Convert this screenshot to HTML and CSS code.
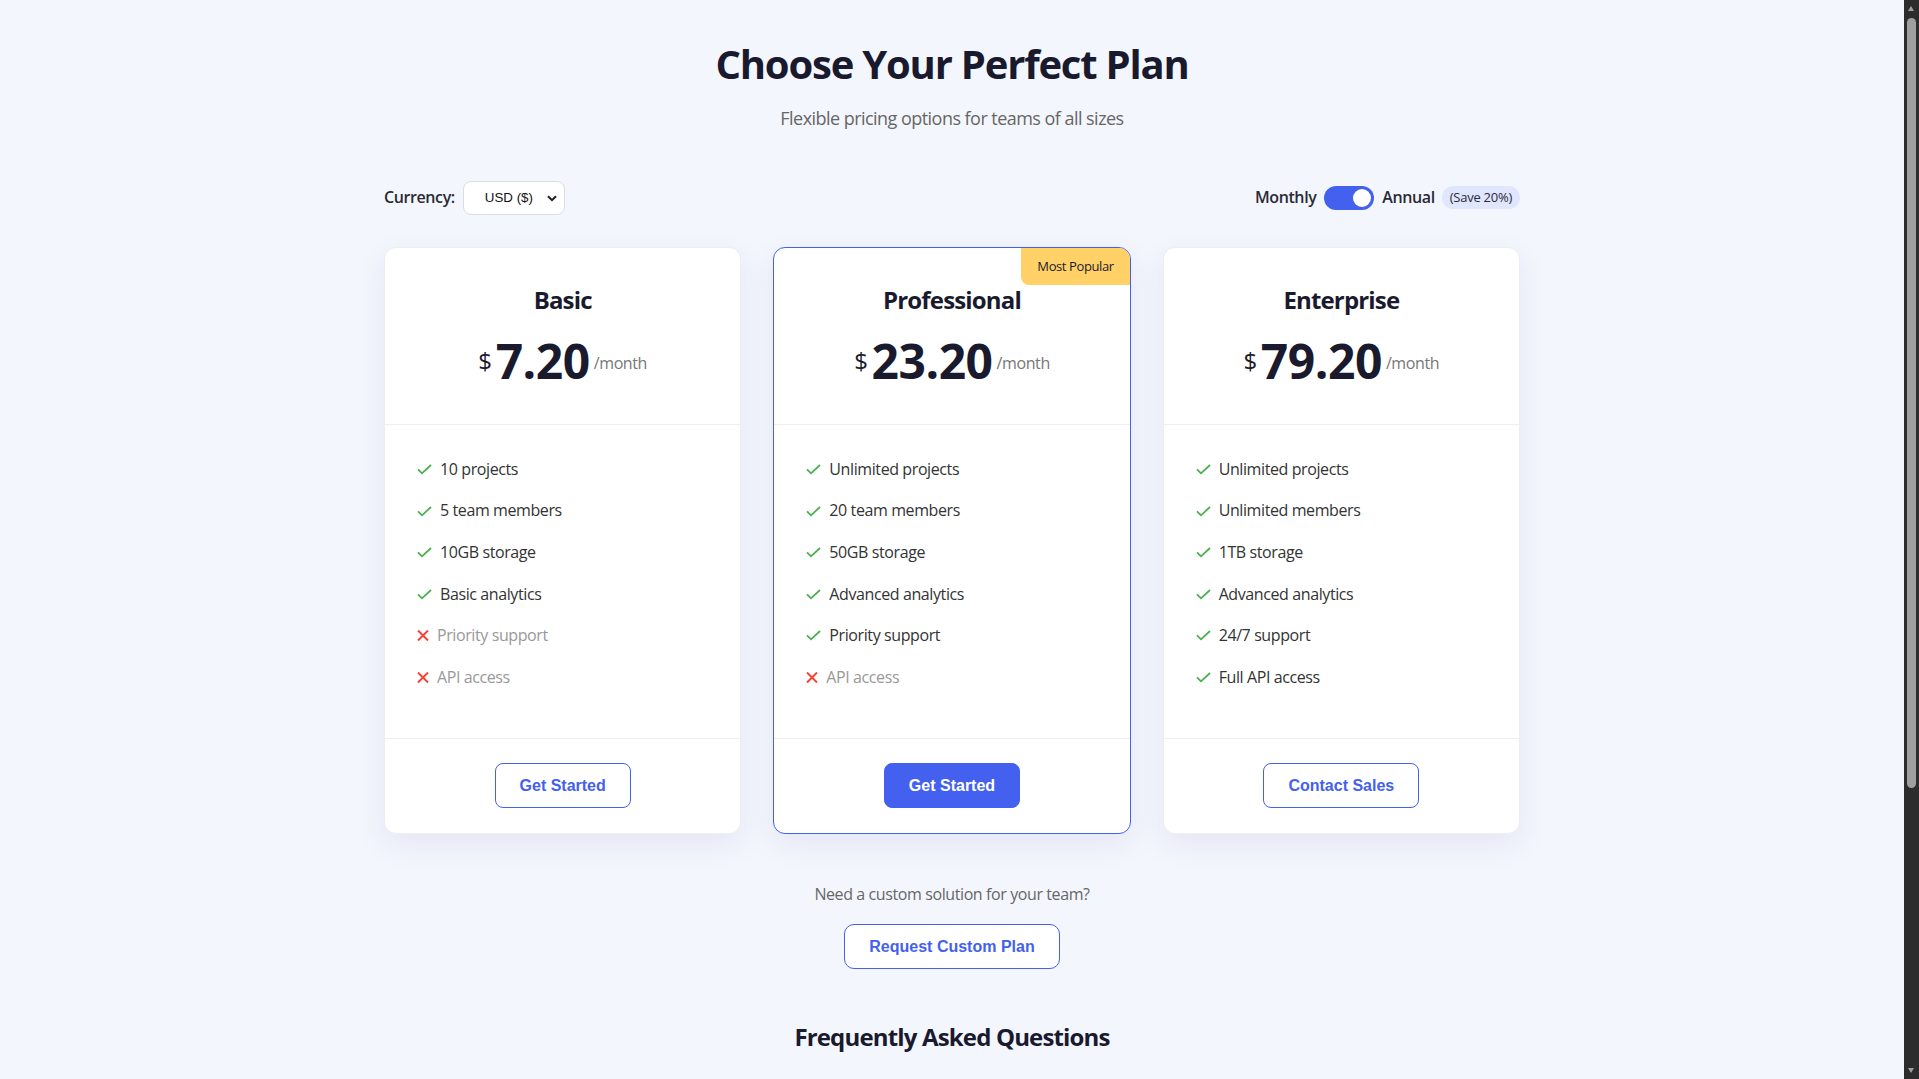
FILE: index.html
```html
<!DOCTYPE html>
<html lang="en">
<head>
<meta charset="utf-8">
<title>Pricing Plans</title>
<link rel="stylesheet" href="styles.css">
</head>
<body>
<div class="page">
  <header class="hero">
    <h1>Choose Your Perfect Plan</h1>
    <p>Flexible pricing options for teams of all sizes</p>
  </header>

  <div class="controls">
    <div class="currency">
      <label for="cur">Currency:</label>
      <span class="select-wrap">
        <select id="cur">
          <option>USD ($)</option>
          <option>EUR (€)</option>
          <option>GBP (£)</option>
        </select>
        <svg class="chev" width="10" height="7" viewBox="0 0 10 7"><path d="M1 1.2 L5 5.2 L9 1.2" fill="none" stroke="#1f1f1f" stroke-width="2"/></svg>
      </span>
    </div>
    <div class="billing">
      <span class="bill-label">Monthly</span>
      <span class="toggle"><span class="knob"></span></span>
      <span class="bill-label">Annual</span>
      <span class="save">(Save 20%)</span>
    </div>
  </div>

  <div class="plans">
    <article class="plan">
      <div class="plan-head">
        <h3>Basic</h3>
        <div class="price"><span class="cur">$</span><span class="amt">7.20</span><span class="per">/month</span></div>
      </div>
      <ul class="features">
        <li><svg class="ic" width="15" height="11" viewBox="0 0 15 11"><path d="M1 5.3 L5 9.3 L14 1" fill="none" stroke="#4caf50" stroke-width="1.8"/></svg>10 projects</li>
        <li><svg class="ic" width="15" height="11" viewBox="0 0 15 11"><path d="M1 5.3 L5 9.3 L14 1" fill="none" stroke="#4caf50" stroke-width="1.8"/></svg>5 team members</li>
        <li><svg class="ic" width="15" height="11" viewBox="0 0 15 11"><path d="M1 5.3 L5 9.3 L14 1" fill="none" stroke="#4caf50" stroke-width="1.8"/></svg>10GB storage</li>
        <li><svg class="ic" width="15" height="11" viewBox="0 0 15 11"><path d="M1 5.3 L5 9.3 L14 1" fill="none" stroke="#4caf50" stroke-width="1.8"/></svg>Basic analytics</li>
        <li class="off"><svg class="ic x" width="12" height="11" viewBox="0 0 12 11"><path d="M1 0.5 L11 10.5 M11 0.5 L1 10.5" fill="none" stroke="#f44336" stroke-width="2"/></svg>Priority support</li>
        <li class="off"><svg class="ic x" width="12" height="11" viewBox="0 0 12 11"><path d="M1 0.5 L11 10.5 M11 0.5 L1 10.5" fill="none" stroke="#f44336" stroke-width="2"/></svg>API access</li>
      </ul>
      <div class="plan-foot"><button class="btn">Get Started</button></div>
    </article>

    <article class="plan popular">
      <span class="badge">Most Popular</span>
      <div class="plan-head">
        <h3>Professional</h3>
        <div class="price"><span class="cur">$</span><span class="amt">23.20</span><span class="per">/month</span></div>
      </div>
      <ul class="features">
        <li><svg class="ic" width="15" height="11" viewBox="0 0 15 11"><path d="M1 5.3 L5 9.3 L14 1" fill="none" stroke="#4caf50" stroke-width="1.8"/></svg>Unlimited projects</li>
        <li><svg class="ic" width="15" height="11" viewBox="0 0 15 11"><path d="M1 5.3 L5 9.3 L14 1" fill="none" stroke="#4caf50" stroke-width="1.8"/></svg>20 team members</li>
        <li><svg class="ic" width="15" height="11" viewBox="0 0 15 11"><path d="M1 5.3 L5 9.3 L14 1" fill="none" stroke="#4caf50" stroke-width="1.8"/></svg>50GB storage</li>
        <li><svg class="ic" width="15" height="11" viewBox="0 0 15 11"><path d="M1 5.3 L5 9.3 L14 1" fill="none" stroke="#4caf50" stroke-width="1.8"/></svg>Advanced analytics</li>
        <li><svg class="ic" width="15" height="11" viewBox="0 0 15 11"><path d="M1 5.3 L5 9.3 L14 1" fill="none" stroke="#4caf50" stroke-width="1.8"/></svg>Priority support</li>
        <li class="off"><svg class="ic x" width="12" height="11" viewBox="0 0 12 11"><path d="M1 0.5 L11 10.5 M11 0.5 L1 10.5" fill="none" stroke="#f44336" stroke-width="2"/></svg>API access</li>
      </ul>
      <div class="plan-foot"><button class="btn primary">Get Started</button></div>
    </article>

    <article class="plan">
      <div class="plan-head">
        <h3>Enterprise</h3>
        <div class="price"><span class="cur">$</span><span class="amt">79.20</span><span class="per">/month</span></div>
      </div>
      <ul class="features">
        <li><svg class="ic" width="15" height="11" viewBox="0 0 15 11"><path d="M1 5.3 L5 9.3 L14 1" fill="none" stroke="#4caf50" stroke-width="1.8"/></svg>Unlimited projects</li>
        <li><svg class="ic" width="15" height="11" viewBox="0 0 15 11"><path d="M1 5.3 L5 9.3 L14 1" fill="none" stroke="#4caf50" stroke-width="1.8"/></svg>Unlimited members</li>
        <li><svg class="ic" width="15" height="11" viewBox="0 0 15 11"><path d="M1 5.3 L5 9.3 L14 1" fill="none" stroke="#4caf50" stroke-width="1.8"/></svg>1TB storage</li>
        <li><svg class="ic" width="15" height="11" viewBox="0 0 15 11"><path d="M1 5.3 L5 9.3 L14 1" fill="none" stroke="#4caf50" stroke-width="1.8"/></svg>Advanced analytics</li>
        <li><svg class="ic" width="15" height="11" viewBox="0 0 15 11"><path d="M1 5.3 L5 9.3 L14 1" fill="none" stroke="#4caf50" stroke-width="1.8"/></svg>24/7 support</li>
        <li><svg class="ic" width="15" height="11" viewBox="0 0 15 11"><path d="M1 5.3 L5 9.3 L14 1" fill="none" stroke="#4caf50" stroke-width="1.8"/></svg>Full API access</li>
      </ul>
      <div class="plan-foot"><button class="btn">Contact Sales</button></div>
    </article>
  </div>

  <section class="custom">
    <p>Need a custom solution for your team?</p>
    <button class="btn">Request Custom Plan</button>
  </section>

  <section class="faq">
    <h2>Frequently Asked Questions</h2>
    <div class="faq-item">
      <h4>Can I change my plan later?</h4>
      <p>Yes, you can upgrade or downgrade your plan at any time from your account settings.</p>
    </div>
    <div class="faq-item">
      <h4>Is there a free trial?</h4>
      <p>All plans come with a 14-day free trial. No credit card required.</p>
    </div>
    <div class="faq-item">
      <h4>What payment methods do you accept?</h4>
      <p>We accept all major credit cards, PayPal and bank transfers for annual plans.</p>
    </div>
  </section>
</div>

<div class="scrollbar" aria-hidden="true">
  <span class="sb-arrow up"></span>
  <span class="sb-thumb"></span>
  <span class="sb-arrow down"></span>
</div>
</body>
</html>
```

FILE: styles.css
```css
* { box-sizing: border-box; }

body {
  margin: 0 15px 0 0;
  background: #f4f6fd;
  color: #333;
  font-family: "Open Sans", "Noto Sans", sans-serif;
  line-height: 1.6;
  letter-spacing: -0.025em;
}

.page {
  max-width: 1200px;
  margin: 0 auto;
  padding: 32px;
}

.hero {
  text-align: center;
  margin-bottom: 48px;
}

.hero h1 {
  margin: 0 0 8px;
  font-size: 40px;
  line-height: 64px;
  font-weight: 700;
  color: #1a1a2e;
  letter-spacing: -0.03em;
}

.hero p {
  margin: 0;
  font-size: 18px;
  line-height: 28.8px;
  color: #666;
  letter-spacing: -0.03em;
}

.controls {
  display: flex;
  justify-content: space-between;
  align-items: center;
  height: 34px;
  margin-bottom: 32px;
}

.currency {
  display: flex;
  align-items: center;
  gap: 8px;
}

.currency label,
.bill-label {
  font-size: 16px;
  font-weight: 600;
  color: #2a2a35;
}

.select-wrap {
  position: relative;
  display: inline-flex;
}

.select-wrap select {
  appearance: none;
  -webkit-appearance: none;
  width: 102px;
  height: 34px;
  border: 1px solid #dcdde3;
  border-radius: 8px;
  background: #fff;
  font-family: "Liberation Sans", Arial, sans-serif;
  font-size: 13.33px;
  letter-spacing: 0;
  color: #111;
  padding: 0 30px 0 21px;
}

.chev {
  position: absolute;
  right: 8px;
  top: 14px;
  pointer-events: none;
}

.billing {
  display: flex;
  align-items: center;
  gap: 8px;
}

.toggle {
  position: relative;
  width: 50px;
  height: 24px;
  border-radius: 12px;
  background: #4361ee;
}

.knob {
  position: absolute;
  top: 3px;
  left: 29px;
  width: 18px;
  height: 18px;
  border-radius: 50%;
  background: #fff;
}

.save {
  background: #e0e6fd;
  color: #2a2a35;
  font-size: 13px;
  line-height: 19px;
  padding: 2px 8px;
  margin-left: -1px;
  border-radius: 12px;
  letter-spacing: -0.02em;
}

.plans {
  display: grid;
  grid-template-columns: repeat(3, 1fr);
  gap: 32px;
}

.plan {
  position: relative;
  display: flex;
  flex-direction: column;
  background: #fff;
  border: 1px solid #eceef4;
  border-radius: 12px;
  box-shadow: 0 10px 30px rgba(40, 55, 130, 0.08);
}

.plan.popular {
  border-color: #4361ee;
}

.badge {
  position: absolute;
  top: 0;
  right: 0;
  background: #ffd166;
  color: #1a1a2e;
  font-size: 13px;
  line-height: 21px;
  padding: 8px 16px;
  border-radius: 0 11px 0 8px;
}

.plan-head {
  text-align: center;
  padding: 33px 32px 24px;
  border-bottom: 1px solid #eee;
}

.plan-head h3 {
  margin: 0 0 4px;
  font-size: 24px;
  line-height: 38px;
  font-weight: 700;
  color: #1a1a2e;
  letter-spacing: -0.035em;
}

.price {
  display: flex;
  justify-content: center;
  align-items: center;
  height: 77px;
  color: #1a1a2e;
}

.cur {
  font-size: 24px;
  line-height: 38.4px;
  margin-right: 4px;
}

.amt {
  font-size: 48px;
  line-height: 76.8px;
  font-weight: 700;
  letter-spacing: -0.01em;
}

.per {
  font-size: 16px;
  line-height: 25.6px;
  color: #777;
  margin-left: 4px;
  margin-top: 4px;
}

.features {
  list-style: none;
  margin: 0;
  padding: 24px 32px 40px;
  flex: 1;
}

.features li {
  display: flex;
  align-items: center;
  padding: 8px 0;
  font-size: 16px;
  line-height: 25.6px;
  color: #333;
}

.features li.off {
  color: #999;
}

.ic {
  flex: none;
  margin-right: 8px;
}

.plan-foot {
  text-align: center;
  padding: 24px 32px 25px;
  border-top: 1px solid #eee;
}

.btn {
  display: inline-block;
  font-family: "Liberation Sans", Arial, sans-serif;
  font-weight: 700;
  font-size: 16px;
  line-height: 19px;
  letter-spacing: 0;
  padding: 12px 24px;
  border: 1px solid #4361ee;
  border-radius: 8px;
  background: #fff;
  color: #4361ee;
  cursor: pointer;
}

.btn.primary {
  background: #4361ee;
  color: #fff;
}

.custom {
  text-align: center;
  margin-top: 48px;
}

.custom p {
  margin: 0 0 16px;
  font-size: 16px;
  line-height: 25.6px;
  color: #666;
}

.custom .btn {
  border-radius: 10px;
}

.faq {
  margin: 49px auto 0;
  max-width: 800px;
}

.faq h2 {
  text-align: center;
  margin: 0 0 32px;
  font-size: 24px;
  line-height: 38.4px;
  font-weight: 700;
  color: #1a1a2e;
  letter-spacing: -0.035em;
}

.faq-item {
  background: #fff;
  border-radius: 10px;
  padding: 20px 24px;
  margin-bottom: 16px;
  box-shadow: 0 4px 14px rgba(40, 55, 130, 0.05);
}

.faq-item h4 {
  margin: 0 0 6px;
  font-size: 17px;
  color: #1a1a2e;
}

.faq-item p {
  margin: 0;
  color: #666;
}

/* simulated dark window scrollbar */
.scrollbar {
  position: fixed;
  top: 0;
  right: 0;
  width: 15px;
  height: 100vh;
  background: #2c2c2c;
}

.sb-thumb {
  position: absolute;
  top: 18px;
  left: 3px;
  width: 9px;
  height: 770px;
  border-radius: 5px;
  background: #9f9f9f;
}

.sb-arrow {
  position: absolute;
  left: 4px;
  width: 0;
  height: 0;
  border-left: 3.5px solid transparent;
  border-right: 3.5px solid transparent;
}

.sb-arrow.up {
  top: 6px;
  border-bottom: 5px solid #9f9f9f;
}

.sb-arrow.down {
  bottom: 6px;
  border-top: 5px solid #9f9f9f;
}
```
